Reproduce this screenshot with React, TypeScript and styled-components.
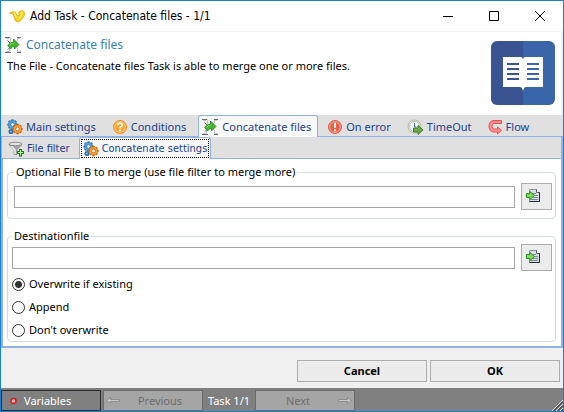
import React from 'react';
import styled, { createGlobalStyle } from 'styled-components';

const narrow = 'Tahoma, "DejaVu Sans Condensed", "Noto Sans", sans-serif';

const Global = createGlobalStyle`
  *, *::before, *::after { box-sizing: border-box; }
  body { margin: 0; background: #f0f0f0; }
  button, input { font: inherit; color: inherit; }
`;

const Window = styled.main`
  display: flex;
  flex-direction: column;
  min-height: 100vh;
  border: 1px solid #1a80d4;
  background: #f0f0f0;
  color: #000;
  font: 11px/14px "Noto Sans", "Open Sans", sans-serif;
`;

const TitleBar = styled.header`
  display: flex;
  align-items: center;
  height: 30px;
  padding-left: 8px;
  background: #fff;
`;

const Title = styled.h1`
  flex: 1;
  margin: 0 0 0 4px;
  font: 400 12px/16px ${narrow};
`;

const CaptionButton = styled.button`
  display: grid;
  place-items: center;
  width: 46px;
  height: 29px;
  padding: 0;
  border: 0;
  background: none;
`;

const Intro = styled.section`
  display: flex;
  justify-content: space-between;
  margin: 1px 2px 0 0;
  padding: 4px 6px 10px 4px;
  background: #fff;
`;

const Heading = styled.h2`
  display: flex;
  align-items: center;
  gap: 4px;
  margin: 0;
  color: #3c7fb1;
  font-size: 12px;
  line-height: 18px;
  font-weight: 400;
`;

const Description = styled.p`
  margin: 5px 0 0 2px;
`;

const IntroBadge = styled.div`
  margin-top: 5px;
  height: 64px;
`;

const TabBar = styled.nav<{ $inner?: boolean }>`
  display: flex;
  align-items: flex-end;
  height: 22px;
  padding-left: ${(p) => (p.$inner ? 0 : 2)}px;
  border-bottom: 1px solid #8fb1e4;
  background: #e0e0e0;
`;

const Tab = styled.button<{ $active?: boolean }>`
  display: flex;
  align-items: center;
  gap: 3px;
  height: ${(p) => (p.$active ? 22 : 20)}px;
  margin: 0 5px ${(p) => (p.$active ? -1 : 0)}px 0;
  padding: 0 6px 0 3px;
  border: 1px solid ${(p) => (p.$active ? '#8fb1e4' : 'transparent')};
  border-bottom: 0;
  border-radius: 3px 3px 0 0;
  background: ${(p) => (p.$active ? '#f8f8f8' : 'transparent')};
  color: #1c3f8c;
  line-height: 16px;
  white-space: nowrap;
`;

const InnerTab = styled(Tab)`
  margin-right: 0;
  padding: 0 ${(p) => (p.$active ? '2px 0 2px' : '8px 0 5px')};
  font-family: ${narrow};
`;

const FocusLabel = styled.span`
  display: flex;
  align-items: center;
  gap: 3px;
  height: 17px;
  padding: 0 1px;
  outline: 1px dotted #000;
`;

const Frame = styled.div`
  border: 2px solid #8fb1e4;
  border-width: 0 2px 2px 1px;
  background: #fff;
`;

const Panel = styled.div`
  display: flex;
  flex-direction: column;
  gap: 10px;
  padding: 6px 5px 4px 4px;
  border-left: 1px solid #8fb1e4;
`;

const Group = styled.fieldset<{ $tight?: boolean }>`
  min-width: 0;
  margin: 0;
  padding: ${(p) => (p.$tight ? '1px 3px 4px 4px' : '4px 3px 8px 6px')};
  border: 1px solid #d3dce4;
  border-radius: 4px;
`;

const Legend = styled.legend`
  padding: 0 2px;
  line-height: 14px;
`;

const FileRow = styled.div`
  display: flex;
  align-items: center;
  gap: 6px;
`;

const TextBox = styled.input`
  flex: 1;
  min-width: 0;
  height: 22px;
  padding: 0 4px;
  border: 1px solid #a6a6a6;
  background: #fff;
`;

const BrowseButton = styled.button`
  display: flex;
  align-items: center;
  width: 31px;
  height: 27px;
  padding: 0 0 3px 4px;
  border: 1px solid #adadad;
  background: #ececec;
`;

const Choices = styled.div`
  display: flex;
  flex-direction: column;
  gap: 9px;
  margin-top: 6px;
`;

const Choice = styled.label`
  display: flex;
  align-items: center;
  gap: 4px;
`;

const Radio = styled.input`
  appearance: none;
  width: 13px;
  height: 13px;
  margin: 0;
  border: 1px solid #333;
  border-radius: 50%;
  background: #fff;
  &:checked {
    background: radial-gradient(circle, #333 3px, #fff 4px);
  }
`;

const Actions = styled.div`
  display: grid;
  grid-template-columns: 130px 130px;
  justify-content: end;
  gap: 3px;
  margin-top: auto;
  padding: 12px 3px 6px;
`;

const ActionButton = styled.button`
  height: 22px;
  padding: 0;
  border: 1px solid #adadad;
  background: #ececec;
  font-weight: 700;
`;

const StatusBar = styled.footer`
  display: flex;
  align-items: center;
  gap: 2px;
  height: 23px;
  padding-top: 2px;
  background: #808080;
  color: #fff;
`;

const StatusButton = styled.button<{ $dim?: boolean }>`
  display: flex;
  align-items: center;
  width: 100px;
  height: 21px;
  padding: 0 2px;
  border: 1px solid ${(p) => (p.$dim ? '#6a6a6a' : '#2c2c2c')};
  background: ${(p) => (p.$dim ? '#a5a5a5' : '#808080')};
  color: ${(p) => (p.$dim ? '#6d6d6d' : '#fff')};
`;

const StatusLabel = styled.span<{ $grow?: boolean }>`
  flex: ${(p) => (p.$grow ? 1 : 'none')};
  text-align: center;
`;

const TaskCount = styled.span`
  width: 48px;
  text-align: center;
`;

const Grip = styled.svg`
  align-self: flex-end;
  margin-left: auto;
`;

const LogoIcon = () => (
  <svg width="17" height="14" viewBox="0 0 17 14" aria-hidden="true">
    <path d="M.5 4L4.500 2.500q2.500 0 3 2.500l1.500 2 1.500-1-1-3q2-1.500 4-1.500 2.500.8 2 4.500Q14 9 11 12q-2 1.500-4.500 0Q5.500 9 4 5z" fill="#f9d21c" stroke="#dfa90c" strokeWidth=".8" />
    <path d="M12.500 2.500q1.500 3-2.500 7M5 3.500l2.500 5" fill="none" stroke="#fff27c" strokeWidth="1.200" />
  </svg>
);

const MergeIcon = () => (
  <svg width="17" height="16" viewBox="0 0 17 16" aria-hidden="true">
    <path d="M0 .5h5l1 1M16 .5h-4M0 15.500h6M12 15.500h4" fill="none" stroke="#6b6b6b" />
    <path d="M5.500 2v3M4.500 12v3M12.500 1v3M12.500 11v4M1 14.500h3M13 14.500h3M1 1.500h3M13 1.500h2" fill="none" stroke="#c4c4c4" />
    <path d="M2.500 3.500L5 6M3 12.500L5 10.500" stroke="#555" />
    <path d="M8.500 2L14 7.500 9.500 12V9.500Q7 9 5.500 12L2.800 8.500Q5 5 8.500 5z" fill="#3fb52c" stroke="#23801d" strokeWidth=".8" />
    <path d="M4.500 8.500Q6.500 6 9 6" stroke="#7fd665" strokeWidth="1.200" fill="none" />
  </svg>
);

const teeth = [0, 45, 90, 135];

const Gear = ({ x, y, fill, edge }: { x: number; y: number; fill: string; edge: string }) => (
  <g transform={`translate(${x} ${y})`}>
    {teeth.map((a) => (
      <rect key={a} x="-5.200" y="-1.100" width="10.400" height="2.200" rx=".5" fill={edge} transform={`rotate(${a})`} />
    ))}
    <circle r="4.100" fill={fill} stroke={edge} strokeWidth=".6" />
    <circle r="1.900" fill="#e6eef5" stroke={edge} strokeWidth=".8" />
  </g>
);

const GearsIcon = () => (
  <svg width="16" height="16" viewBox="0 0 16 16" aria-hidden="true">
    <circle cx="4" cy="12.500" r="1.800" fill="#79b9e8" stroke="#2671b3" strokeWidth="1.500" />
    <Gear x={5.5} y={5.5} fill="#55a4df" edge="#2a75b5" />
    <Gear x={10.5} y={10} fill="#f9a03a" edge="#c9660f" />
  </svg>
);

const QuestionIcon = () => (
  <svg width="16" height="16" viewBox="0 0 16 16" aria-hidden="true">
    <circle cx="8" cy="8" r="6.500" fill="#fba52e" stroke="#ef8b16" />
    <circle cx="8" cy="8" r="5.300" fill="none" stroke="#ffd08a" />
    <path d="M5.800 6.200Q5.800 4.200 8 4.200Q10.200 4.200 10.200 6Q10.200 7.500 8 8.300V9.500M8 10.500v1.800" fill="none" stroke="#fff" strokeWidth="1.600" />
  </svg>
);

const ErrorIcon = () => (
  <svg width="16" height="16" viewBox="0 0 16 16" aria-hidden="true">
    <circle cx="8" cy="8" r="6.500" fill="#e8634f" stroke="#d9604f" />
    <circle cx="8" cy="8" r="5.400" fill="none" stroke="#f5a598" />
    <path d="M8 3.800v5M8 10.200v2" stroke="#fff" strokeWidth="1.800" />
  </svg>
);

const ClockIcon = () => (
  <svg width="17" height="16" viewBox="0 0 17 16" aria-hidden="true">
    <circle cx="7.500" cy="7.500" r="6.500" fill="#e7eff6" stroke="#c9b48a" />
    <circle cx="7.500" cy="7.500" r="5" fill="#f4f9fd" stroke="#a9bfd4" />
    <path d="M7.500 4v4h2" fill="none" stroke="#587999" />
    <path d="M6.500 9h4.500v-2.500l5 4.500-5 4.500v-2.500H6.500z" fill="#6fa84c" stroke="#457d30" />
  </svg>
);

const FlowIcon = () => (
  <svg width="15" height="16" viewBox="0 0 15 16" aria-hidden="true">
    <path d="M13.500 1.500H6C2.500 1.500 1 4 1 7s1.500 6 5 6h3.500v2l4-3.500-4-3.500v2H6.500C4.500 10 4 8.500 4 7s.8-2.500 2.500-2.500h7z" fill="#fb8f8f" stroke="#ea5050" />
  </svg>
);

const FilterIcon = () => (
  <svg width="16" height="16" viewBox="0 0 16 16" aria-hidden="true">
    <path d="M1 3.500l5 5v5h3v-5l5-5z" fill="#a6a6a6" stroke="#8a8a8a" strokeWidth=".8" />
    <path d="M3.500 5l3.500 4v4" fill="none" stroke="#f4f4f4" strokeWidth="1.400" />
    <ellipse cx="7.500" cy="3" rx="6.500" ry="1.800" fill="#e3e3e3" stroke="#777" strokeWidth=".8" />
    <path d="M9 10h2V8h3v2h2v3h-2v2.500h-3V13H9z" fill="#128012" />
    <path d="M10 11.500h5M12.500 9v5.500" stroke="#b6f5a0" />
  </svg>
);

const BrowseIcon = () => (
  <svg width="15" height="15" viewBox="0 0 15 15" aria-hidden="true">
    <path d="M3.500 1.500h7l3 3v9h-10z" fill="#d9dee7" stroke="#8b93a1" />
    <path d="M10.500 1v3.500H14" fill="#fff" stroke="#5b6370" />
    <path d="M6 5.500h4M8 7.500h4M7 9.500h5M5 11.500h7" stroke="#7f8898" />
    <path d="M3.500 13.500h10v-9" fill="none" stroke="#222c3a" />
    <path d="M.5 5.500H4v-2l4.500 4-4.500 4v-2H.5z" fill="#7ddc58" stroke="#2f8f26" />
  </svg>
);

const BookIcon = () => (
  <svg width="64" height="64" viewBox="0 0 64 64" aria-hidden="true">
    <path d="M32 0H6a6 6 0 0 0-6 6v52a6 6 0 0 0 6 6h26z" fill="#3a5391" />
    <path d="M32 0h26a6 6 0 0 1 6 6v52a6 6 0 0 1-6 6H32z" fill="#3a66a9" />
    <path d="M12 16h18q1 0 2 2q1-2 2-2h18v30H35q-2 0-3 4q-1-4-3-4H12z" fill="#fff" />
    <path d="M16 23h12M16 28h12M16 33h12M16 38h12" stroke="#3a5391" strokeWidth="2" />
    <path d="M36 23h12M36 28h12M36 33h12M36 38h12" stroke="#3a66a9" strokeWidth="2" />
  </svg>
);

const ArrowIcon = ({ back = false }: { back?: boolean }) => (
  <svg width="14" height="9" viewBox="0 0 14 9" aria-hidden="true">
    <path
      d={back ? 'M13.500 3.500v2H4.500v2L.5 4.500l4-3v2z' : 'M.5 3.500v2h9v2l4-3-4-3v2z'}
      fill="#c8c8c8"
      stroke="#8e8e8e"
    />
  </svg>
);

const DotIcon = () => (
  <svg width="20" height="9" viewBox="0 0 20 9" aria-hidden="true">
    <circle cx="9.500" cy="5" r="2.500" fill="#ffb0b0" stroke="#d62020" strokeWidth="1.500" />
  </svg>
);

const tabs = [
  { label: 'Main settings', icon: <GearsIcon /> },
  { label: 'Conditions', icon: <QuestionIcon /> },
  { label: 'Concatenate files', icon: <MergeIcon />, active: true },
  { label: 'On error', icon: <ErrorIcon /> },
  { label: 'TimeOut', icon: <ClockIcon /> },
  { label: 'Flow', icon: <FlowIcon /> },
];

const choices = ['Overwrite if existing', 'Append', "Don't overwrite"];

const FilePicker = ({ label }: { label: string }) => (
  <FileRow>
    <TextBox type="text" aria-label={label} />
    <BrowseButton type="button" aria-label={`Browse: ${label}`}>
      <BrowseIcon />
    </BrowseButton>
  </FileRow>
);

export default function App() {
  return (
    <Window>
      <Global />
      <TitleBar>
        <LogoIcon />
        <Title>Add Task - Concatenate files - 1/1</Title>
        <CaptionButton type="button" aria-label="Minimize">
          <svg width="10" height="10"><path d="M0 5.500h10" stroke="#000" /></svg>
        </CaptionButton>
        <CaptionButton type="button" aria-label="Maximize">
          <svg width="10" height="10"><path d="M.5.5h9v9h-9z" stroke="#000" fill="none" /></svg>
        </CaptionButton>
        <CaptionButton type="button" aria-label="Close">
          <svg width="10" height="10"><path d="M0 0l10 10M10 0L0 10" stroke="#000" /></svg>
        </CaptionButton>
      </TitleBar>
      <Intro>
        <div>
          <Heading><MergeIcon />Concatenate files</Heading>
          <Description>The File - Concatenate files Task is able to merge one or more files.</Description>
        </div>
        <IntroBadge><BookIcon /></IntroBadge>
      </Intro>
      <TabBar>
        {tabs.map((t) => (
          <Tab key={t.label} type="button" $active={t.active}>
            {t.icon}
            {t.label}
          </Tab>
        ))}
      </TabBar>
      <Frame>
        <TabBar $inner>
          <InnerTab type="button"><FilterIcon />File filter</InnerTab>
          <InnerTab type="button" $active>
            <FocusLabel><GearsIcon />Concatenate settings</FocusLabel>
          </InnerTab>
        </TabBar>
        <Panel>
          <Group>
            <Legend>Optional File B to merge (use file filter to merge more)</Legend>
            <FilePicker label="Optional File B to merge" />
          </Group>
          <Group $tight>
            <Legend>Destinationfile</Legend>
            <FilePicker label="Destinationfile" />
            <Choices>
              {choices.map((c, i) => (
                <Choice key={c}>
                  <Radio type="radio" name="mode" defaultChecked={i === 0} />
                  {c}
                </Choice>
              ))}
            </Choices>
          </Group>
        </Panel>
      </Frame>
      <Actions>
        <ActionButton type="button">Cancel</ActionButton>
        <ActionButton type="button">OK</ActionButton>
      </Actions>
      <StatusBar>
        <StatusButton type="button"><DotIcon /><StatusLabel>Variables</StatusLabel></StatusButton>
        <StatusButton type="button" $dim><ArrowIcon back /><StatusLabel $grow>Previous</StatusLabel></StatusButton>
        <TaskCount>Task 1/1</TaskCount>
        <StatusButton type="button" $dim><StatusLabel $grow>Next</StatusLabel><ArrowIcon /></StatusButton>
        <Grip width="11" height="11" viewBox="0 0 11 11" aria-hidden="true">
          <path d="M0 11L11 0M4 11l7-7M8 11l3-3" stroke="#e8e8e8" />
          <path d="M1.500 11L11 1.500M5.500 11L11 5.500M9.500 11L11 9.500" stroke="#222" />
        </Grip>
      </StatusBar>
    </Window>
  );
}
